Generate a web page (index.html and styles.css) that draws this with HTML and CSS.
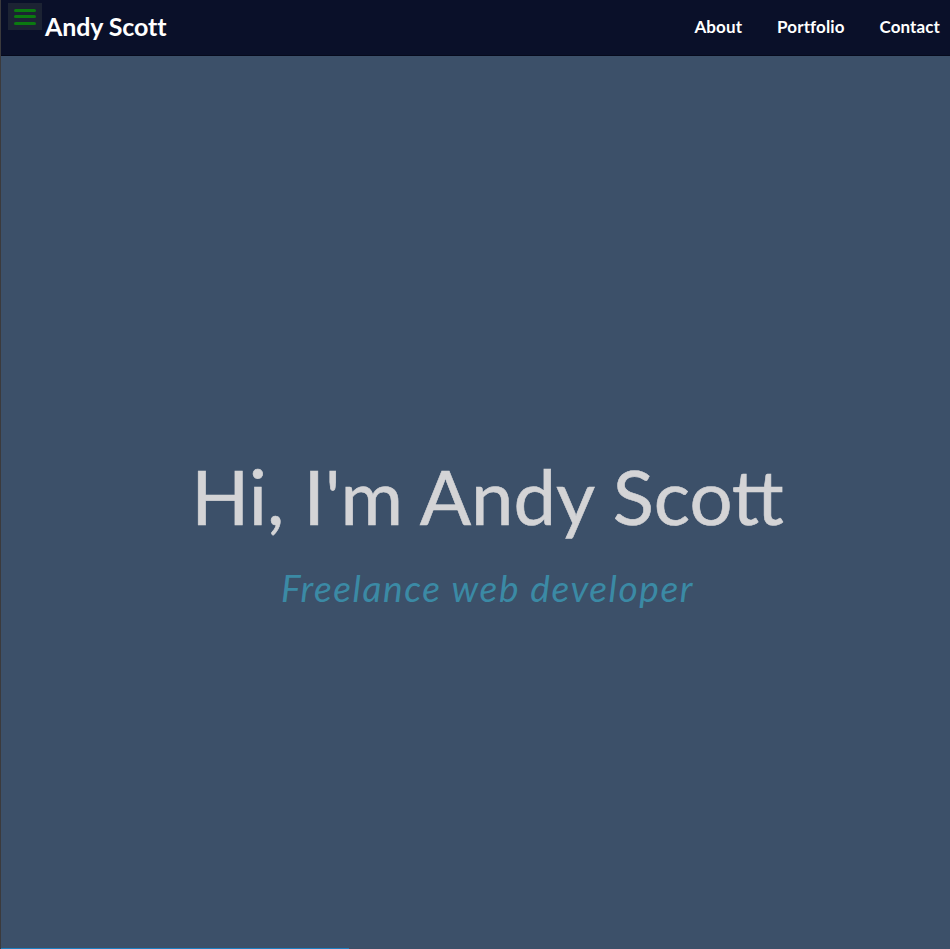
FILE: index.html
```html
<!DOCTYPE html>
<html lang="en">
<head>
<meta charset="utf-8">
<title>Andy Scott</title>
<link rel="stylesheet" href="styles.css">
</head>
<body>
<header class="topbar">
  <button class="menu-btn" aria-label="Menu">
    <span class="bar"></span><span class="bar"></span><span class="bar"></span>
  </button>
  <a class="logo" href="#">Andy Scott</a>
  <nav class="nav">
    <a href="#about">About</a>
    <a href="#portfolio">Portfolio</a>
    <a href="#contact">Contact</a>
  </nav>
</header>
<main class="hero">
  <h1 class="hero-title">Hi, I'm Andy Scott</h1>
  <p class="hero-sub">Freelance web developer</p>
  <div class="progress"></div>
</main>
</body>
</html>
```
FILE: styles.css
```css
* { box-sizing: border-box; }
html, body { margin: 0; padding: 0; height: 100%; }
body {
  background: #3c5069;
  font-family: "Lato", "Open Sans", sans-serif;
  border-left: 1px solid #3b3a3c;
  overflow: hidden;
}
.topbar {
  height: 56px;
  background: #0a1029;
  border-bottom: 1px solid #060a1c;
  display: flex;
  align-items: center;
  padding: 0 10px 0 7px;
  position: relative;
}
.menu-btn {
  width: 34px;
  height: 27px;
  background: #1c2333;
  border: 0;
  padding: 0;
  margin: -22px 3px 0 0;
  display: flex;
  flex-direction: column;
  align-items: center;
  justify-content: center;
  gap: 3.5px;
}
.bar {
  display: block;
  width: 22px;
  height: 3px;
  border-radius: 2px;
  background: #0b7a10;
}
.logo {
  color: #ffffff;
  text-decoration: none;
  font-weight: 700;
  font-size: 25px;
  letter-spacing: -0.1px;
  margin-top: -3px;
}
.nav {
  margin-left: auto;
  display: flex;
  gap: 35px;
  margin-top: -3px;
}
.nav a {
  color: #ffffff;
  text-decoration: none;
  font-weight: 700;
  font-size: 17px;
  letter-spacing: 0.1px;
}
.hero {
  height: calc(100% - 56px);
  display: flex;
  flex-direction: column;
  align-items: center;
  justify-content: center;
  padding: 56px 0 0 24px;
  position: relative;
}
.hero-title {
  margin: 0;
  color: #d4d4d6;
  font-weight: 400;
  font-size: 76px;
  line-height: 1.2;
  -webkit-text-stroke: 0.6px #d4d4d6;
}
.hero-sub {
  margin: 25px 0 0;
  color: #3b8aa5;
  font-style: italic;
  font-size: 37px;
  letter-spacing: 1.6px;
  line-height: 1.2;
}
.progress {
  position: absolute;
  left: 0;
  bottom: 0;
  width: 348px;
  height: 1px;
  background: #1e7fc0;
}
```
